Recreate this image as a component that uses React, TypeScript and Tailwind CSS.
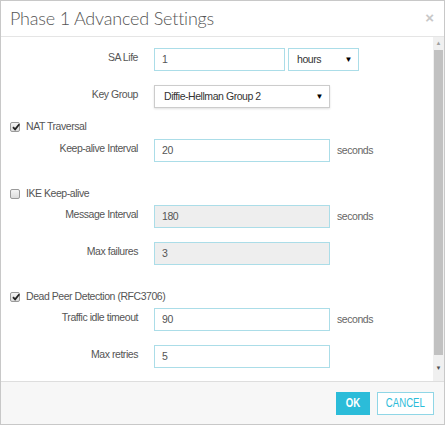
import React from "react";

const font = "font-['Liberation_Sans',Arial,sans-serif]";
const txt = "text-[10.5px] tracking-[-0.45px]";

function Check({ checked }: { checked: boolean }) {
  return (
    <span className="relative flex h-[10px] w-[10px] items-center justify-center rounded-[2px] border border-[#9a9a9a] bg-gradient-to-b from-[#f4f4f4] to-[#dcdcdc]">
      {checked && (
        <svg viewBox="0 0 10 10" className="absolute left-[0px] top-[-1px] h-[10px] w-[10px]">
          <path d="M2 5.2 L4.1 7.4 L8.3 2.2" fill="none" stroke="#222" strokeWidth="1.8" />
        </svg>
      )}
    </span>
  );
}

function Field({
  label,
  value,
  disabled,
  unit,
  className = "",
}: {
  label: string;
  value: string;
  disabled?: boolean;
  unit?: string;
  className?: string;
}) {
  return (
    <div className={`flex items-center ${className}`}>
      <div className={`-mt-[3px] w-[137px] text-right text-[#555] ${txt}`}>{label}</div>
      <div
        className={`ml-[16px] flex h-[23px] w-[176px] items-center border border-[#abdde8] px-[7px] text-[#555] ${txt} ${
          disabled ? "bg-[#eeeeee]" : "bg-white"
        }`}
      >
        {value}
      </div>
      {unit && <span className={`ml-[7px] text-[#666] ${txt}`}>{unit}</span>}
    </div>
  );
}

function CheckRow({ label, checked, className = "" }: { label: string; checked: boolean; className?: string }) {
  return (
    <div className={`flex h-[14px] items-center pl-[9px] ${className}`}>
      <Check checked={checked} />
      <span className={`ml-[6px] text-[#555] ${txt}`}>{label}</span>
    </div>
  );
}

export default function App() {
  return (
    <div className={`flex h-[425px] w-[445px] flex-col border border-[#c8c8c8] bg-white ${font}`}>
      {/* Header */}
      <div className="flex h-[36px] items-center justify-between border-b border-[#e5e5e5] pl-[9px] pr-[10px]">
        <h1 className="font-['Lato',sans-serif] text-[18px] font-light tracking-[-0.2px] text-[#555]">
          Phase 1 Advanced Settings
        </h1>
        <span className="mb-[2px] text-[15px] font-bold leading-none text-[#c8c8c8]">×</span>
      </div>

      {/* Body */}
      <div className="flex flex-1 overflow-hidden">
        <div className="flex-1 pt-[11px]">
          <div className="flex items-center">
            <div className={`-mt-[3px] w-[137px] text-right text-[#555] ${txt}`}>SA Life</div>
            <div className={`ml-[16px] flex h-[23px] w-[131px] items-center border border-[#abdde8] px-[7px] text-[#555] ${txt}`}>
              1
            </div>
            <div className={`ml-[3px] flex h-[23px] w-[71px] items-center justify-between border border-[#abdde8] pl-[8px] pr-[6px] text-[#333] ${txt}`}>
              hours
              <span className="text-[8px] text-black">▼</span>
            </div>
          </div>

          <div className="mt-[14px] flex items-center">
            <div className={`-mt-[3px] w-[137px] text-right text-[#555] ${txt}`}>Key Group</div>
            <div className={`ml-[16px] flex h-[23px] w-[176px] items-center justify-between border border-[#cccccc] pl-[9px] pr-[6px] text-[#333] shadow-[0_1px_2px_rgba(0,0,0,0.12)] ${txt}`}>
              Diffie-Hellman Group 2
              <span className="text-[8px] text-black">▼</span>
            </div>
          </div>

          <CheckRow label="NAT Traversal" checked className="mt-[12px]" />
          <Field label="Keep-alive Interval" value="20" unit="seconds" className="mt-[5px]" />

          <CheckRow label="IKE Keep-alive" checked={false} className="mt-[25px]" />
          <Field label="Message Interval" value="180" unit="seconds" disabled className="mt-[4px]" />
          <Field label="Max failures" value="3" disabled className="mt-[14px]" />

          <CheckRow label="Dead Peer Detection (RFC3706)" checked className="mt-[25px]" />
          <Field label="Traffic idle timeout" value="90" unit="seconds" className="mt-[4px]" />
          <Field label="Max retries" value="5" className="mt-[14px]" />
        </div>

        {/* Scrollbar */}
        <div className="flex w-[11px] flex-col items-center bg-[#f0f0f0]">
          <div className="flex h-[13px] items-center justify-center text-[6px] text-[#a0a0a0]">▲</div>
          <div className="h-[305px] w-[9px] bg-[#c1c1c1]" />
          <div className="flex flex-1 items-center justify-center text-[6px] text-[#505050]">▼</div>
        </div>
      </div>

      {/* Footer */}
      <div className="flex h-[43px] items-center justify-end gap-[7px] border-t border-[#dedede] bg-[#f7f7f7] pr-[10px]">
        <button className="flex h-[23px] w-[34px] items-center justify-center bg-[#2bbcd9] text-[12px] font-bold text-white">
          <span className="inline-block scale-x-[0.8]">OK</span>
        </button>
        <button className="flex h-[23px] w-[57px] items-center justify-center border border-[#8fd6e6] bg-white text-[12px] text-[#2bbcd9]">
          <span className="inline-block scale-x-[0.8]">CANCEL</span>
        </button>
      </div>
    </div>
  );
}
